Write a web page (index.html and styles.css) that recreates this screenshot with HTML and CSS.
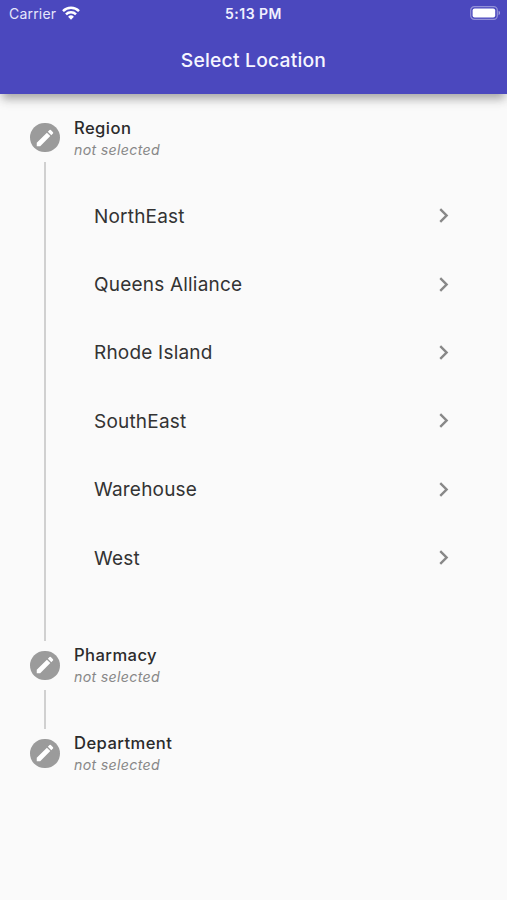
FILE: index.html
```
<!DOCTYPE html>
<html lang="en">
<head>
<meta charset="utf-8">
<title>Select Location</title>
<link rel="stylesheet" href="styles.css">
</head>
<body>
<svg class="defs" aria-hidden="true">
  <symbol id="pencil" viewBox="0 0 24 24"><path d="M3 17.25V21h3.75L17.81 9.94l-3.75-3.75L3 17.25zM20.71 7.04a.996.996 0 0 0 0-1.41l-2.34-2.34a.996.996 0 0 0-1.41 0l-1.83 1.83 3.75 3.75 1.83-1.83z"/></symbol>
  <symbol id="chevron" viewBox="0 0 24 24"><path d="M10 6 8.59 7.41 13.17 12l-4.58 4.59L10 18l6-6z"/></symbol>
</svg>
<header class="appbar">
  <div class="status">
    <div class="carrier"><span>Carrier</span>
      <svg class="wifi" viewBox="0 0 18 14"><g fill="none" stroke="#fff" stroke-width="2.5"><path d="M1 5.1a11.4 11.4 0 0 1 16 0"/><path d="M4 8.3a7.1 7.1 0 0 1 10 0"/></g><path fill="#fff" d="M9 13.8 6.1 10.8a4.1 4.1 0 0 1 5.8 0z"/></svg>
    </div>
    <time class="clock">5:13 PM</time>
    <svg class="battery" viewBox="0 0 31 14"><rect x=".7" y=".7" width="26.6" height="12.6" rx="3.6" fill="none" stroke="#fff" stroke-opacity=".4" stroke-width="1.2"/><rect x="2.6" y="2.5" width="22.6" height="9" rx="2" fill="#fff"/><path d="M28.6 4.8a2.4 2.4 0 0 1 0 4.4z" fill="#fff" fill-opacity=".5"/></svg>
  </div>
  <h1 class="title">Select Location</h1>
</header>
<main class="stepper">
  <section class="step">
    <div class="step-head">
      <span class="badge"><svg><use href="#pencil"/></svg></span>
      <div><h2>Region</h2><p>not selected</p></div>
    </div>
    <ul class="options">
      <li><span>NorthEast</span><svg><use href="#chevron"/></svg></li>
      <li><span>Queens Alliance</span><svg><use href="#chevron"/></svg></li>
      <li><span>Rhode Island</span><svg><use href="#chevron"/></svg></li>
      <li><span>SouthEast</span><svg><use href="#chevron"/></svg></li>
      <li><span>Warehouse</span><svg><use href="#chevron"/></svg></li>
      <li><span>West</span><svg><use href="#chevron"/></svg></li>
    </ul>
  </section>
  <section class="step">
    <div class="step-head">
      <span class="badge"><svg><use href="#pencil"/></svg></span>
      <div><h2>Pharmacy</h2><p>not selected</p></div>
    </div>
  </section>
  <section class="step">
    <div class="step-head">
      <span class="badge"><svg><use href="#pencil"/></svg></span>
      <div><h2>Department</h2><p>not selected</p></div>
    </div>
  </section>
</main>
</body>
</html>
```
FILE: styles.css
```
* { box-sizing: border-box; margin: 0; padding: 0; }
body {
  min-height: 900px;
  background: #fafafa;
  color: #2b2b2b;
  font-family: Inter, "Liberation Sans", sans-serif;
  overflow: hidden;
}
.defs { position: absolute; width: 0; height: 0; }
.appbar {
  height: 93.5px;
  background: #4b48be;
  color: #fff;
  box-shadow: 0 8px 7px -4px rgba(0,0,0,.18), 0 7px 10px rgba(0,0,0,.12), 0 2px 14px rgba(0,0,0,.08);
}
.status {
  height: 26px;
  padding: 1px 6px 0 9px;
  display: grid;
  grid-template-columns: 1fr auto 1fr;
  align-items: center;
}
.carrier { display: flex; align-items: center; gap: 6px; font-size: 14px; letter-spacing: .2px; color: #e6e6fb; }
.wifi { width: 18px; height: 14px; margin-top: -1px; }
.clock { margin-left: -3px; font-size: 14px; font-weight: 600; letter-spacing: .5px; color: #f0f0ff; }
.battery { width: 31px; height: 14px; margin-top: -1px; justify-self: end; }
.title { height: 68px; line-height: 68px; text-align: center; font-size: 19.3px; font-weight: 500; letter-spacing: .2px; color: #f6f6ff; }
.step { position: relative; }
.step-head { display: flex; align-items: center; height: 88px; padding-left: 30px; gap: 14.4px; }
.step-head > div { padding-top: 2px; }
.badge {
  width: 29.6px;
  height: 29.6px;
  border-radius: 50%;
  background: #9b9b9b;
  display: flex;
  align-items: center;
  justify-content: center;
}
.badge svg { width: 22px; height: 22px; fill: #fff; }
h2 { font-size: 16.6px; font-weight: 500; line-height: 22px; letter-spacing: .43px; }
p { font-size: 14.2px; font-style: italic; line-height: 22px; letter-spacing: .32px; color: #888; }
.step:not(:last-child)::after {
  content: "";
  position: absolute;
  left: 44px;
  top: 68.5px;
  bottom: -19.5px;
  width: 1.5px;
  background: #d0d0d0;
}
.options { list-style: none; padding: 0 49px 29.5px 94px; }
.options li { display: flex; align-items: center; justify-content: space-between; height: 68.4px; font-size: 19px; letter-spacing: .2px; color: #333; }
.options span { padding-top: 1px; }
.options svg { width: 29px; height: 29px; fill: #888; }
```
